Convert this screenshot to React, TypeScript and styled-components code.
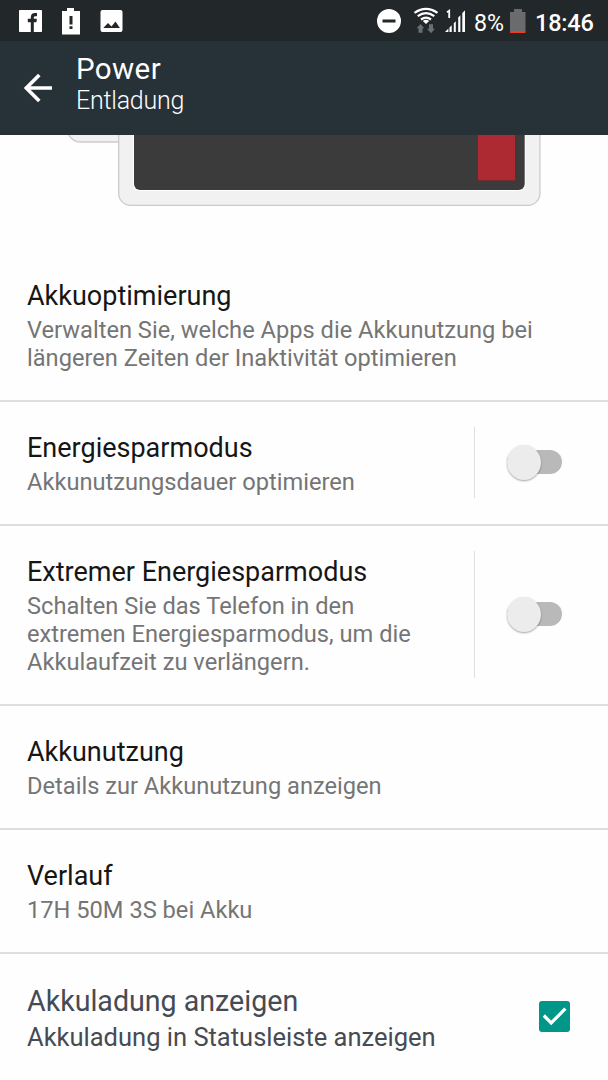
import React from "react";
import styled, { createGlobalStyle } from "styled-components";

const GlobalStyle = createGlobalStyle`
  * { box-sizing: border-box; }
  body { margin: 0; background: #fefefe; font-family: Roboto, sans-serif; }
`;

const Screen = styled.main`
  width: 608px;
  height: 1080px;
  overflow: hidden;
  display: flex;
  flex-direction: column;
  background: #fefefe;
`;

const StatusBar = styled.header`
  height: 41px;
  flex: none;
  display: flex;
  justify-content: space-between;
  background: #22272a;
  color: #fff;
`;

const StatusIcons = styled.svg`
  display: block;
  flex: none;
`;

const StatusRight = styled.div`
  display: flex;
  width: 238px;
`;

const StatusText = styled.span<{ $width: number; $size: number; $medium?: boolean; $spacing?: number }>`
  width: ${(p) => p.$width}px;
  font-size: ${(p) => p.$size}px;
  font-weight: ${(p) => (p.$medium ? 500 : 400)};
  letter-spacing: ${(p) => p.$spacing ?? 0}px;
  line-height: 28px;
  padding-top: 9px;
  white-space: nowrap;
`;

const TitleBar = styled.div`
  height: 94px;
  flex: none;
  display: flex;
  background: #263238;
  color: #fff;
`;

const BackButton = styled.button`
  width: 76px;
  height: 94px;
  padding: 0;
  border: 0;
  background: none;
  display: block;
  svg { display: block; }
`;

const TitleGroup = styled.div`
  padding-top: 10px;
`;

const PageTitle = styled.h1`
  margin: 0;
  font-size: 29.5px;
  font-weight: 400;
  line-height: 36px;
  letter-spacing: 0.4px;
`;

const PageSubtitle = styled.p`
  margin: 0;
  font-size: 25px;
  font-weight: 300;
  line-height: 28px;
  letter-spacing: -0.25px;
`;

const BatteryFigure = styled.svg`
  display: block;
  flex: none;
`;

const Row = styled.section<{ $last?: boolean }>`
  flex: none;
  display: flex;
  border-bottom: ${(p) => (p.$last ? "0" : "2px solid #dedede")};
`;

const RowText = styled.div<{ $last?: boolean }>`
  flex: 1;
  padding: ${(p) => (p.$last ? 29 : 27)}px 0 28px 27px;
`;

const RowTitle = styled.h2<{ $slate?: boolean }>`
  margin: 0 0 ${(p) => (p.$slate ? 0 : 1)}px;
  font-size: ${(p) => (p.$slate ? 28.6 : 27)}px;
  font-weight: 400;
  line-height: ${(p) => (p.$slate ? 37 : 38)}px;
  color: ${(p) => (p.$slate ? "#464b53" : "#161616")};
  white-space: nowrap;
`;

const RowSummary = styled.p<{ $slate?: boolean }>`
  margin: 0;
  font-size: ${(p) => (p.$slate ? 25.5 : 23.65)}px;
  line-height: ${(p) => (p.$slate ? 34 : 28)}px;
  color: ${(p) => (p.$slate ? "#464b53" : "#757575")};
  white-space: pre-line;
`;

const SwitchArea = styled.div`
  width: 134px;
  margin: 25px 0 26px;
  padding: 0 0 1px 32px;
  border-left: 1px solid #dfdfdf;
  display: flex;
  align-items: center;
`;

const SwitchTrack = styled.button`
  width: 55px;
  height: 24px;
  padding: 0;
  border: 0;
  border-radius: 12px;
  background: #b9b9b9;
  display: flex;
  align-items: center;
`;

const SwitchKnob = styled.span`
  width: 34px;
  height: 35px;
  margin-top: 1px;
  flex: none;
  border-radius: 50%;
  background: #ececec;
  box-shadow: 0 1px 2px rgba(0, 0, 0, 0.35);
`;

const CheckArea = styled.div`
  padding: 47px 38.5px 0 0;
`;

const Checkbox = styled.span`
  display: block;
  width: 31px;
  height: 31px;
  border-radius: 3px;
  background: #009688;
  svg { display: block; }
`;

type Item = { title: string; summary: string; toggle?: boolean };

const items: Item[] = [
  {
    title: "Akkuoptimierung",
    summary: "Verwalten Sie, welche Apps die Akkunutzung bei\nlängeren Zeiten der Inaktivität optimieren",
  },
  { title: "Energiesparmodus", summary: "Akkunutzungsdauer optimieren", toggle: true },
  {
    title: "Extremer Energiesparmodus",
    summary: "Schalten Sie das Telefon in den\nextremen Energiesparmodus, um die\nAkkulaufzeit zu verlängern.",
    toggle: true,
  },
  { title: "Akkunutzung", summary: "Details zur Akkunutzung anzeigen" },
  { title: "Verlauf", summary: "17H 50M 3S bei Akku" },
];

const NotificationIcons = () => (
  <StatusIcons width="130" height="41" viewBox="0 0 130 41">
    <rect x="19" y="10" width="23" height="22" rx="0.8" fill="#fff" />
    <path d="M30.800 32v-9.800h-3v-3.500h3v-1.500c0-2.800 1.700-4.200 4.200-4.200h2v3.200h-1.500c-1.300 0-1.700.6-1.700 1.500v1h3.100l-.5 3.500h-2.600V32z" fill="#22272a" />
    <path d="M62 11h5V8h7v3h6v23.500H62z" fill="#fff" />
    <path d="M69.500 16h3v8.500h-3zM69.500 26.200h3v2.800h-3z" fill="#22272a" />
    <rect x="100.500" y="10" width="22" height="22" rx="2" fill="#fff" />
    <path d="M103.300 28l4.700-5 3.500 3.400 4-5 4.400 6.600z" fill="#22272a" />
  </StatusIcons>
);

const SystemIcons = () => (
  <StatusIcons width="104" height="41" viewBox="370 0 104 41">
    <circle cx="389" cy="21" r="12" fill="#fff" />
    <rect x="382.500" y="19.500" width="13" height="3" fill="#22272a" />
    <g fill="none" stroke="#fff" strokeWidth="2.200">
      <path d="M414.500 12.800Q426 4.800 437.500 12.800" />
      <path d="M417.700 16.200Q426 10.100 434.300 16.200" />
      <path d="M421 19.500Q426 15.800 431 19.500" />
    </g>
    <path d="M422.800 20.900Q426 18.800 429.200 20.900L426 24z" fill="#fff" />
    <path d="M420.500 24l3.800 4.300h-1.800v4.400h-4v-4.400h-1.800zM431 33.200l-4-4.500h2v-4.500h4v4.500h2z" fill="#697074" />
    <path d="M447 12.200l2.200-1.500V18" fill="none" stroke="#fff" strokeWidth="1.800" />
    <path d="M445 32l3.400-3.400V32zM449.500 27.500l2.200-2.200V32h-2.200zM453.800 23.200l2-2V32h-2zM458.200 17.500l2.200-2.200V32h-2.200zM462.300 13l2.700-2.800V32h-2.700z" fill="#fff" />
  </StatusIcons>
);

const BatteryIcon = () => (
  <StatusIcons width="26" height="41" viewBox="509 0 26 41">
    <path d="M510 12h4V9h8v3h3.500v19.500H510z" fill="#696b6c" />
    <rect x="510" y="31" width="15.500" height="2" fill="#f53b17" />
  </StatusIcons>
);

const BatteryDrawing = () => (
  <BatteryFigure width="608" height="115" viewBox="0 135 608 115">
    <rect x="67.500" y="100" width="80" height="42" rx="13" fill="#f1f1f1" stroke="#cbcbcb" strokeWidth="1.300" />
    <rect x="118.700" y="100" width="421.200" height="105.400" rx="12" fill="#f1f1f1" stroke="#cbcbcb" strokeWidth="1.300" />
    <rect x="133" y="100" width="392.500" height="91" rx="6.500" fill="#fff" />
    <rect x="134" y="100" width="390.700" height="90" rx="6" fill="#3b3b3b" />
    <rect x="478" y="120" width="37" height="60.500" fill="#ad2a33" />
    <rect x="478" y="180" width="37" height="1" fill="#702c31" />
  </BatteryFigure>
);

export default function App() {
  return (
    <>
      <GlobalStyle />
      <Screen>
        <StatusBar>
          <NotificationIcons />
          <StatusRight>
            <SystemIcons />
            <StatusText $width={35} $size={23.2}>8%</StatusText>
            <BatteryIcon />
            <StatusText $width={73} $size={23.5} $spacing={-0.2} $medium>18:46</StatusText>
          </StatusRight>
        </StatusBar>
        <TitleBar>
          <BackButton aria-label="Zurück">
            <svg width="76" height="94" viewBox="0 41 76 94" fill="none" stroke="#fff" strokeWidth="3.600">
              <path d="M52 88H27M39.300 75L26.300 88l13 13" />
            </svg>
          </BackButton>
          <TitleGroup>
            <PageTitle>Power</PageTitle>
            <PageSubtitle>Entladung</PageSubtitle>
          </TitleGroup>
        </TitleBar>
        <BatteryDrawing />
        {items.map((item) => (
          <Row key={item.title}>
            <RowText>
              <RowTitle>{item.title}</RowTitle>
              <RowSummary>{item.summary}</RowSummary>
            </RowText>
            {item.toggle && (
              <SwitchArea>
                <SwitchTrack role="switch" aria-checked={false} aria-label={item.title}>
                  <SwitchKnob />
                </SwitchTrack>
              </SwitchArea>
            )}
          </Row>
        ))}
        <Row $last>
          <RowText $last>
            <RowTitle $slate>Akkuladung anzeigen</RowTitle>
            <RowSummary $slate>Akkuladung in Statusleiste anzeigen</RowSummary>
          </RowText>
          <CheckArea>
            <Checkbox role="checkbox" aria-checked={true} aria-label="Akkuladung anzeigen">
              <svg width="31" height="31" viewBox="0 0 31 31" fill="none" stroke="#fff" strokeWidth="3.200">
                <path d="M4.800 14.500l7.400 7.400L26.400 7.700" />
              </svg>
            </Checkbox>
          </CheckArea>
        </Row>
      </Screen>
    </>
  );
}
